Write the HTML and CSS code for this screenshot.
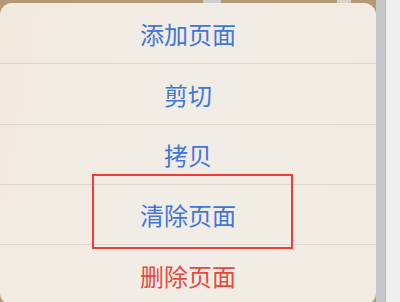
FILE: index.html
```html
<!DOCTYPE html>
<html lang="zh-CN">
<head>
    <meta charset="UTF-8">
    <meta name="viewport" content="width=device-width, initial-scale=1.0">
    <title>页面菜单</title>
    <link rel="stylesheet" href="styles.css">
</head>
<body>

<div class="screen">
    <div class="canvas">
        <div class="top-strip">
            <span class="strip-gray"></span>
            <span class="strip-icon"></span>
        </div>
        <div class="action-sheet">
            <div class="action">添加页面</div>
            <div class="action">剪切</div>
            <div class="action">拷贝</div>
            <div class="action">清除页面</div>
            <div class="action danger">删除页面</div>
            <div class="highlight"></div>
        </div>
    </div>
    <div class="scroll-track"></div>
    <div class="side"></div>
</div>

</body>
</html>
```

FILE: styles.css
```css
/* General Styles */
* {
    box-sizing: border-box;
    margin: 0;
    padding: 0;
}

body {
    font-family: "Noto Sans CJK SC", "Noto Sans", sans-serif;
    width: 400px;
    height: 302px;
    overflow: hidden;
    background: #efeff0;
}

.screen {
    display: flex;
    height: 302px;
}

.canvas {
    width: 376px;
    background: #b49a74;
    display: flex;
    flex-direction: column;
}

.top-strip {
    height: 3px;
    flex-shrink: 0;
    position: relative;
}

.strip-gray {
    position: absolute;
    left: 203px;
    top: 0;
    width: 18px;
    height: 3px;
    background: #cfcdcb;
}

.strip-icon {
    position: absolute;
    left: 337px;
    top: 0;
    width: 14px;
    height: 3px;
    background: #d8d2c8;
}

.scroll-track {
    width: 10px;
    background: #c6c7cb;
    border-right: 1px solid #b9babe;
}

.side {
    flex: 1;
    background: #efeff0;
}

/* Action sheet */
.action-sheet {
    position: relative;
    height: 302px;
    flex-shrink: 0;
    border-radius: 12px;
    background: linear-gradient(100deg, #f1e9de 0%, #f1ede6 45%, #f1ebe2 100%);
    overflow: hidden;
}

.action {
    height: 60px;
    display: flex;
    align-items: center;
    justify-content: center;
    font-size: 24px;
    color: #3f76db;
    border-bottom: 1px solid #ddd6cb;
}

.action:nth-child(-n+2) {
    height: 61px;
}

.action.danger {
    color: #e8483c;
    border-bottom: none;
}

.highlight {
    position: absolute;
    left: 92px;
    top: 171px;
    width: 201px;
    height: 75px;
    border: 2px solid #f23a3a;
}
```
